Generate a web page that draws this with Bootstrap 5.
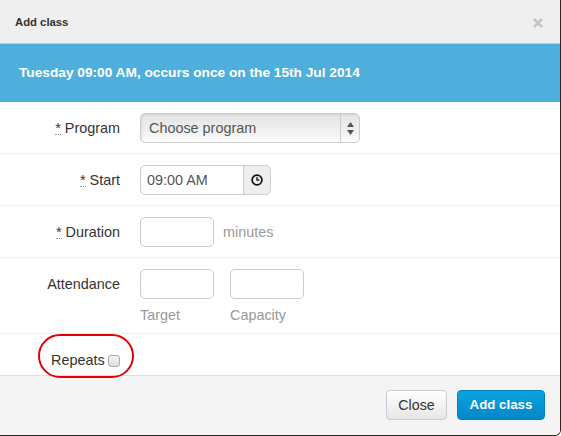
<!DOCTYPE html>
<html lang="en">
<head>
<meta charset="utf-8">
<title>Add class</title>
<link href="https://cdn.jsdelivr.net/npm/bootstrap@5.3.0/dist/css/bootstrap.min.css" rel="stylesheet">
<style>
html,body{height:436px;overflow:hidden;background:#fff}
body{font-family:"Liberation Sans",Arial,sans-serif;font-size:14.4px;color:#333}
.shell{width:561px;height:436px;border-right:1px solid #2a2620;border-bottom:1px solid #2a2620;border-bottom-right-radius:6px;background:#fff;display:flex;flex-direction:column;overflow:hidden}
.head{height:44px;background:#efefef;border-bottom:1px solid #ccc;padding:2px 17px 0 15px}
.head-title{font-size:11.3px;font-weight:700;color:#333}
.x-btn{background:none;border:0;padding:0;color:#c4c4c4;line-height:0}
.banner{height:58px;background:#4fafdc;color:#fff;font-size:13.7px;font-weight:700;padding:0 19px}
.rowline{height:52px;border-bottom:1px solid #eee;padding-top:11px}
.rowline.tall{height:76px}
.lab{width:120px;text-align:right;height:30px;line-height:30px;flex:none;color:#333}
.req{border-bottom:1px dotted #999;display:inline-block;line-height:12px}
.ctrls{margin-left:20px}
.fake-select{width:220px;height:30px;border:1px solid #ccc;border-radius:5px;background:linear-gradient(#e4e4e4,#f6f6f6 85%,#fff);color:#555;box-shadow:inset 1px 1px 2px rgba(0,0,0,.08)}
.fake-select .sel-txt{padding-left:8px;font-size:14.4px;line-height:28px}
.sel-arrow{width:19px;height:28px;border-left:1px solid #ccc}
.time-grp{width:131px;height:30px;flex-wrap:nowrap}
.time-grp .form-control{height:30px;min-height:0;padding:0 6px;font-family:inherit;font-size:14.4px;color:#555;border-color:#ccc;border-radius:5px 0 0 5px;box-shadow:none}
.time-grp .input-group-text{width:28px;padding:0;justify-content:center;background:#eee;border-color:#ccc;border-radius:0 5px 5px 0;margin-left:-1px}
.box{width:74px;height:30px;min-height:0;padding:0 6px;border:1px solid #ccc;border-radius:5px;box-shadow:none}
.hint{color:#999;font-size:14.4px;line-height:30px;margin-left:1px}
.sub{color:#999;font-size:14.4px;line-height:20px;margin-top:6px}
.repeat-row{height:42px;position:relative;padding-left:51px;padding-top:18px;line-height:16px;border-bottom:1px solid #ddd}
.repeat-row .form-check-input{width:12px;height:12px;margin:3px 0 0 3px;border:1px solid #aaa;border-radius:3px;background:linear-gradient(#f4f4f4,#ddd);float:none;vertical-align:top}
.ring{position:absolute;left:38px;top:0;width:96px;height:44px;border:2px solid #e60000;border-radius:22px;pointer-events:none}
.foot{flex:1;background:#f4f4f4;padding:14px 15px 0 0;gap:10px}
.b-close,.b-add{height:30px;padding:0;border-radius:4px;line-height:28px}
.b-close{width:61px;font-size:14.2px;color:#333;background:linear-gradient(#fff,#e6e6e6);border:1px solid #ccc}
.b-add{width:88px;font-size:13.3px;color:#fff;font-weight:700;background:linear-gradient(#08a5e0,#0586c9);border:1px solid #0680bd}
</style>
</head>
<body>
<div class="shell">
  <div class="head d-flex align-items-center justify-content-between">
    <span class="head-title">Add class</span>
    <button type="button" class="x-btn" aria-label="Close"><svg width="10" height="10" viewBox="0 0 10 10"><path d="M1 1l8 8M9 1l-8 8" stroke="currentColor" stroke-width="2.6" fill="none"/></svg></button>
  </div>
  <div class="banner d-flex align-items-center">Tuesday 09:00 AM, occurs once on the 15th Jul 2014</div>

  <div class="rowline d-flex">
    <div class="lab"><span class="req">*</span> Program</div>
    <div class="ctrls">
      <div class="fake-select d-flex justify-content-between">
        <span class="sel-txt">Choose program</span>
        <span class="sel-arrow d-flex align-items-center justify-content-center"><svg width="7" height="13" viewBox="0 0 7 13"><path d="M3.5 0L7 5H0zM3.5 13L0 8h7z" fill="#555"/></svg></span>
      </div>
    </div>
  </div>

  <div class="rowline d-flex">
    <div class="lab"><span class="req">*</span> Start</div>
    <div class="ctrls">
      <div class="input-group time-grp">
        <input type="text" class="form-control" value="09:00 AM">
        <span class="input-group-text"><svg width="12" height="12" viewBox="0 0 12 12"><circle cx="6" cy="6" r="4.9" fill="none" stroke="#111" stroke-width="1.7"/><path d="M6 3v3.2h2.4" fill="none" stroke="#111" stroke-width="1.3"/></svg></span>
      </div>
    </div>
  </div>

  <div class="rowline d-flex">
    <div class="lab"><span class="req">*</span> Duration</div>
    <div class="ctrls d-flex gap-2">
      <input type="text" class="form-control box">
      <span class="hint">minutes</span>
    </div>
  </div>

  <div class="rowline tall d-flex">
    <div class="lab">Attendance</div>
    <div class="ctrls d-flex gap-3">
      <div><input type="text" class="form-control box"><div class="sub">Target</div></div>
      <div><input type="text" class="form-control box"><div class="sub">Capacity</div></div>
    </div>
  </div>

  <div class="repeat-row">
    <label>Repeats<input class="form-check-input" type="checkbox"></label>
    <span class="ring"></span>
  </div>

  <div class="foot d-flex justify-content-end">
    <button type="button" class="btn b-close">Close</button>
    <button type="button" class="btn b-add">Add class</button>
  </div>
</div>
</body>
</html>
